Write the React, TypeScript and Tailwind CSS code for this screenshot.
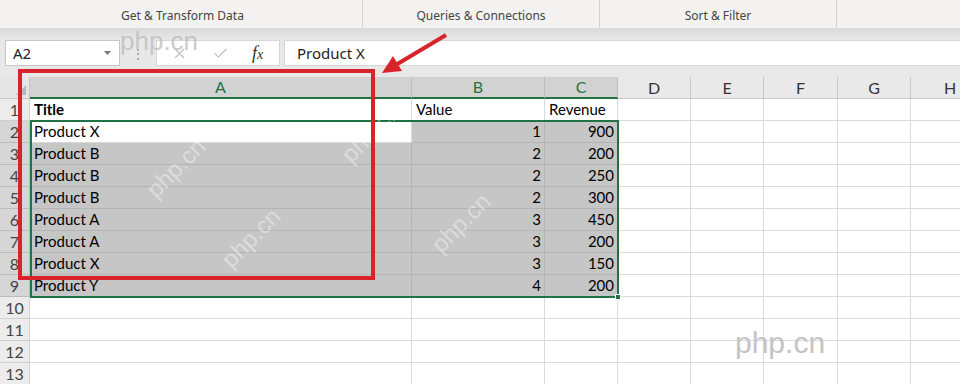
import { Check, X } from "lucide-react";

const cols = [
  { l: "A", w: "w-[382px]", sel: true },
  { l: "B", w: "w-[133px]", sel: true },
  { l: "C", w: "w-[73px]", sel: true },
  { l: "D", w: "w-[73px]", sel: false },
  { l: "E", w: "w-[73px]", sel: false },
  { l: "F", w: "w-[74px]", sel: false },
  { l: "G", w: "w-[73px]", sel: false },
  { l: "H", w: "w-[79px]", sel: false },
];

const rows: (string | number)[][] = [
  ["Title", "Value", "Revenue"],
  ["Product X", 1, 900],
  ["Product B", 2, 200],
  ["Product B", 2, 250],
  ["Product B", 2, 300],
  ["Product A", 3, 450],
  ["Product A", 3, 200],
  ["Product X", 3, 150],
  ["Product Y", 4, 200],
  [],
  [],
  [],
  [],
];

function Cell({ value, col, row }: { value?: string | number; col: number; row: number }) {
  // selection is A2:C9, A2 stays white as the active cell
  const inSel = row >= 2 && row <= 9 && col <= 2;
  const active = row === 2 && col === 0;
  const shaded = inSel && !active;
  const isNum = typeof value === "number";
  return (
    <div
      className={`${cols[col].w} flex h-full shrink-0 items-center border-r border-b px-[4px] ${
        shaded ? "border-[#b4b4b4] bg-[#c6c6c6]" : "border-[#dadada] bg-white"
      } ${isNum ? "justify-end pr-[3px]" : ""} ${row === 1 && col === 0 ? "font-bold" : ""}`}
    >
      {value}
    </div>
  );
}

export default function App() {
  return (
    <div className="relative h-[384px] w-[960px] overflow-hidden bg-white font-['Lato',sans-serif] text-[15px] text-black">
      {/* ribbon group labels */}
      <div className="flex h-[28px] bg-[#f3f2f1] font-['Noto_Sans',sans-serif] text-[12px] text-[#444]">
        <div className="flex w-[363px] items-end justify-center border-r border-[#d2d2d2] pb-[3px] pl-[3px]">Get &amp; Transform Data</div>
        <div className="flex w-[237px] items-end justify-center border-r border-[#d2d2d2] pb-[3px]">Queries &amp; Connections</div>
        <div className="flex w-[237px] items-end justify-center border-r border-[#d2d2d2] pb-[3px]">Sort &amp; Filter</div>
        <div className="flex-1" />
      </div>

      {/* formula bar */}
      <div className="flex h-[49px] items-start bg-gradient-to-b from-[#d9d9d9] to-[#e8e8e8] to-[25%] pt-[12px] font-['Noto_Sans',sans-serif]">
        <div className="ml-[5px] flex h-[26px] w-[115px] items-center justify-between border border-[#c6c6c6] bg-white pl-[7px] pr-[8px] text-[15px] text-[#222]">
          <span>A2</span>
          <svg width="7" height="4" viewBox="0 0 7 4">
            <path d="M0 0h7L3.5 4z" fill="#777" />
          </svg>
        </div>
        <div className="flex h-[26px] w-[36px] items-center justify-center text-[14px] text-[#9a9a9a]">⋮</div>
        <div className="flex h-[26px] w-[124px] items-center border border-[#d6d6d6] bg-white">
          <X className="ml-[14px] h-[17px] w-[17px] text-[#bdbdbd]" strokeWidth={1.5} />
          <Check className="ml-[24px] h-[17px] w-[17px] text-[#bdbdbd]" strokeWidth={1.5} />
          <span className="ml-[23px] font-['Liberation_Serif',serif] text-[18px] italic text-[#333]">
            f<span className="text-[14px]">x</span>
          </span>
        </div>
        <div className="ml-[4px] flex h-[26px] flex-1 items-center border border-r-0 border-[#d6d6d6] bg-white pl-[12px] text-[15px] text-[#222]">
          Product X
        </div>
      </div>

      {/* column headers */}
      <div className="flex h-[22px] text-[16px]">
        <div className="relative h-full w-[30px] shrink-0 border-r border-b border-[#c6c6c6] bg-[#e6e6e6]">
          <svg className="absolute right-[3px] bottom-[3px]" width="10" height="10" viewBox="0 0 10 10">
            <path d="M10 0v10H0z" fill="#b8b8b8" />
          </svg>
        </div>
        {cols.map((c) => (
          <div
            key={c.l}
            className={`${c.w} flex h-full shrink-0 items-center justify-center border-r ${
              c.sel ? "border-r-[#bcbcbc] border-b-2 border-b-[#217346] bg-[#d2d2d2] text-[#217346]" : "border-b border-[#c8c8c8] bg-[#e9e9e9] text-[#333]"
            }`}
          >
            {c.l}
          </div>
        ))}
      </div>

      {/* rows */}
      {rows.map((r, i) => {
        const n = i + 1;
        const sel = n >= 2 && n <= 9;
        return (
          <div key={n} className="flex h-[22px]">
            <div
              className={`flex h-full w-[30px] shrink-0 items-center justify-center border-r border-b text-[16px] ${
                sel ? "border-[#bcbcbc] bg-[#d6d6d6] text-[#444]" : "border-[#cfcfcf] bg-[#ececec] text-[#444]"
              }`}
            >
              {n}
            </div>
            {cols.map((c, ci) => (
              <Cell key={c.l} value={r[ci]} col={ci} row={n} />
            ))}
          </div>
        );
      })}

      {/* selection outline and fill handle */}
      <div className="pointer-events-none absolute top-[120px] left-[30px] h-[178px] w-[589px] border-2 border-[#217346]" />
      <div className="pointer-events-none absolute top-[294px] left-[615px] h-[6px] w-[6px] border border-white bg-[#217346]" />

      {/* watermarks */}
      <div className="pointer-events-none absolute top-[22px] left-[120px] font-['Liberation_Sans',sans-serif] text-[26px] text-[#bdbdbd]/80">php.cn</div>
      <div className="pointer-events-none absolute top-[320px] left-[735px] font-['Liberation_Sans',sans-serif] text-[30px] text-[#c4c4c4]">php.cn</div>
      <div className="pointer-events-none absolute top-[150px] left-[140px] -rotate-45 font-['Liberation_Sans',sans-serif] text-[24px] text-white/40">php.cn</div>
      <div className="pointer-events-none absolute top-[220px] left-[215px] -rotate-45 font-['Liberation_Sans',sans-serif] text-[24px] text-white/40">php.cn</div>
      <div className="pointer-events-none absolute top-[115px] left-[335px] -rotate-45 font-['Liberation_Sans',sans-serif] text-[24px] text-white/40">php.cn</div>
      <div className="pointer-events-none absolute top-[205px] left-[425px] -rotate-45 font-['Liberation_Sans',sans-serif] text-[24px] text-white/40">php.cn</div>

      {/* red annotation box + arrow */}
      <div className="pointer-events-none absolute top-[69px] left-[18px] h-[211px] w-[357px] border-4 border-[#d9232b]" />
      <svg className="pointer-events-none absolute top-0 left-0" width="960" height="384">
        <line x1="446" y1="35" x2="394" y2="66" stroke="#d9232b" strokeWidth="4" />
        <polygon points="382,73 402,71 393,56" fill="#d9232b" />
      </svg>
    </div>
  );
}
